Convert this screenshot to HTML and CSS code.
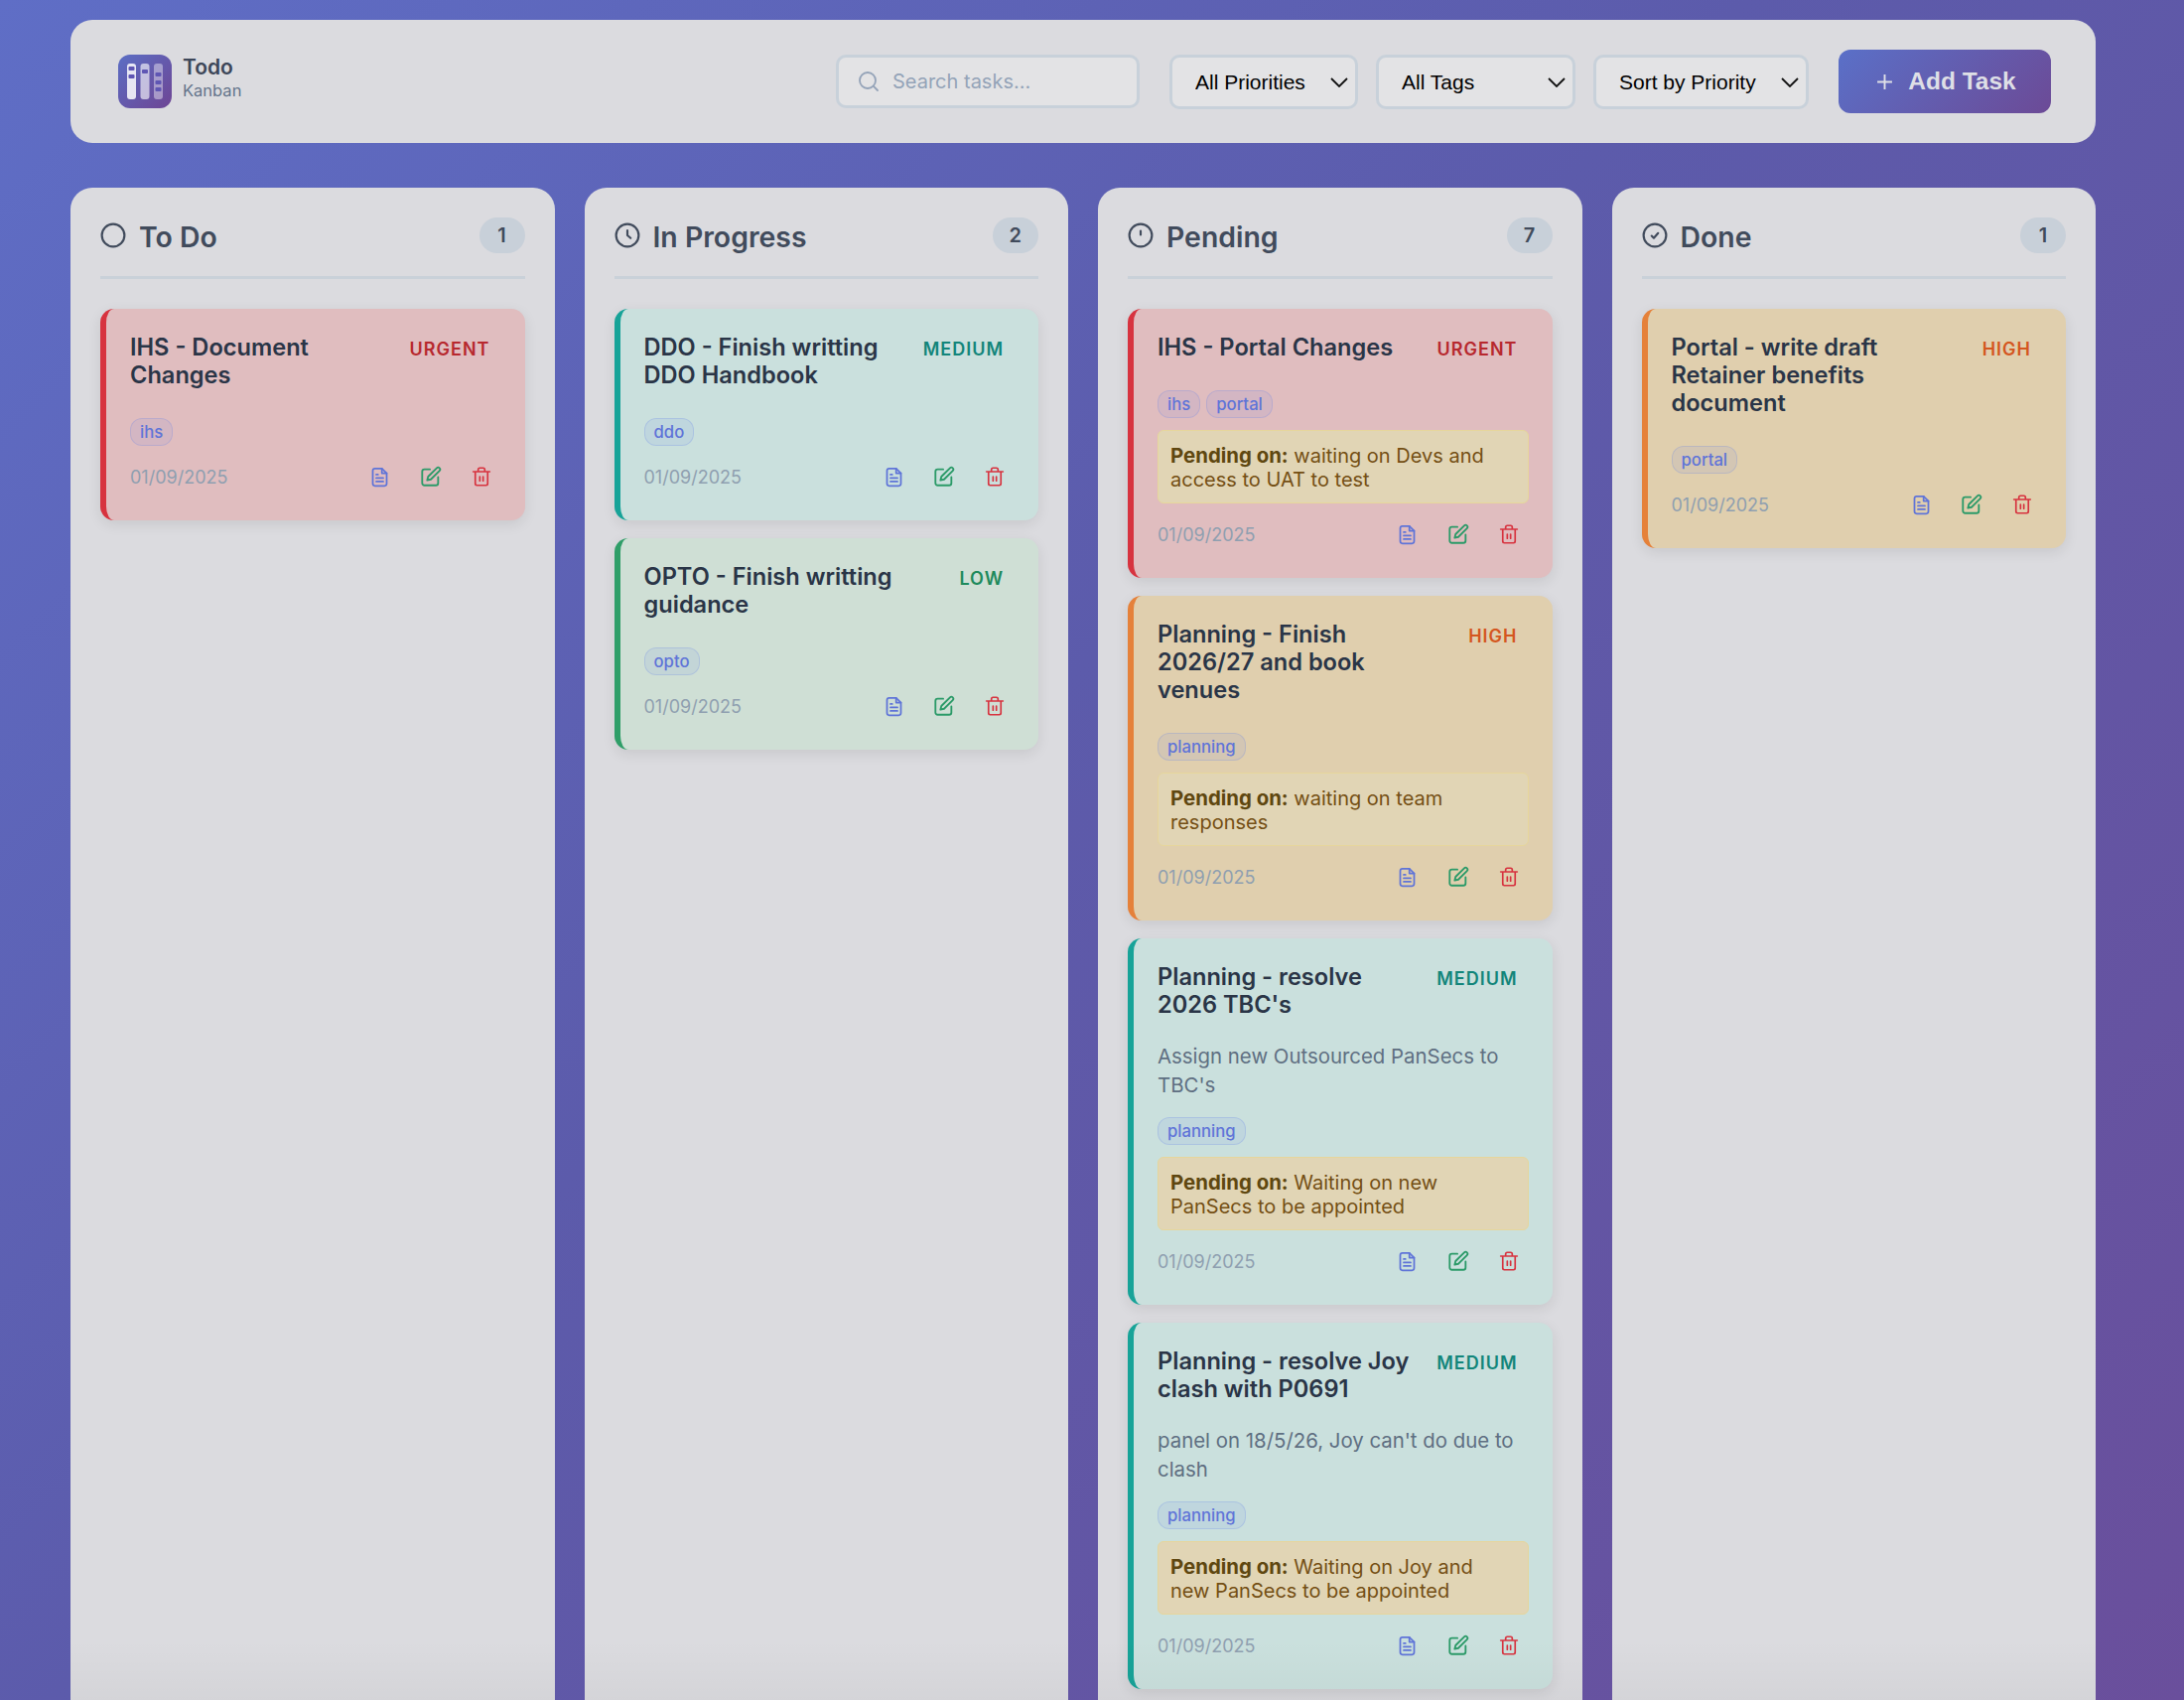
FILE: index.html
```html
<!DOCTYPE html>
<html lang="en">
<head>
  <meta charset="UTF-8" />
  <meta name="viewport" content="width=device-width, initial-scale=1.0"/>
  <title>Todo Kanban</title>
  <link rel="stylesheet" href="styles.css">
</head>
<body>
  <svg class="sprite" aria-hidden="true">
    <symbol id="i-doc" viewBox="0 0 20 24">
      <path d="M12.5 2H4.5A2.5 2.5 0 0 0 2 4.5v15A2.5 2.5 0 0 0 4.5 22h11a2.500 2.500 0 0 0 2.500-2.500V7.500z"/>
      <path d="M12.500 2v5.500H18M6 9h2M6 13h8M6 17h8"/>
    </symbol>
    <symbol id="i-edit" viewBox="0 0 24 24">
      <path d="M11 4H5a2.500 2.500 0 0 0-2.500 2.500V19A2.500 2.500 0 0 0 5 21.500h12.500A2.500 2.500 0 0 0 20 19v-6.500"/>
      <path d="M18.500 2.500a2.100 2.100 0 0 1 3 3L12 15l-4 1 1-4z"/>
    </symbol>
    <symbol id="i-trash" viewBox="0 0 22 24">
      <path d="M1 6h20M3.500 6v14.500A2 2 0 0 0 5.500 22.500h11a2 2 0 0 0 2-2V6M7 6V3.500a2 2 0 0 1 2-2h4a2 2 0 0 1 2 2V6M9 12v5M13 12v5"/>
    </symbol>
    <symbol id="i-chevron" viewBox="0 0 18 10">
      <path d="M1 1l8 8 8-8"/>
    </symbol>
  </svg>

  <header class="topbar">
    <div class="brand">
      <svg class="brand-logo" viewBox="0 0 54 54">
        <defs>
          <linearGradient id="logoGrad" x1="0" y1="0" x2="1" y2="1">
            <stop offset="0" stop-color="#5b6ec4"/>
            <stop offset="1" stop-color="#6e4594"/>
          </linearGradient>
        </defs>
        <rect width="54" height="54" rx="12" fill="url(#logoGrad)"/>
        <rect x="9" y="9" width="9" height="36" rx="3" fill="#fff" fill-opacity=".85"/>
        <rect x="22.500" y="9" width="9" height="36" rx="3" fill="#fff" fill-opacity=".62"/>
        <rect x="36" y="9" width="9" height="36" rx="3" fill="#fff" fill-opacity=".42"/>
        <g fill="#5f56b4">
          <rect x="10.500" y="12" width="6" height="4" rx="1"/>
          <rect x="10.500" y="20" width="6" height="4" rx="1"/>
          <rect x="24" y="15" width="6" height="4" rx="1"/>
          <rect x="37.500" y="18" width="6" height="4" rx="1"/>
          <rect x="37.500" y="26" width="6" height="4" rx="1"/>
          <rect x="37.500" y="33" width="6" height="4" rx="1"/>
        </g>
      </svg>
      <div class="brand-text">
        <div class="brand-name">Todo</div>
        <div class="brand-sub">Kanban</div>
      </div>
    </div>

    <div class="controls">
      <label class="search">
        <svg viewBox="0 0 24 24"><circle cx="11" cy="11" r="8"/><path d="M21 21l-4.300-4.300"/></svg>
        <input type="text" placeholder="Search tasks..." />
      </label>
      <div class="filters">
        <div class="select-wrap w-priority">
          <select><option>All Priorities</option></select>
          <svg><use href="#i-chevron"/></svg>
        </div>
        <div class="select-wrap w-tags">
          <select><option>All Tags</option></select>
          <svg><use href="#i-chevron"/></svg>
        </div>
        <div class="select-wrap w-sort">
          <select><option>Sort by Priority</option></select>
          <svg><use href="#i-chevron"/></svg>
        </div>
      </div>
      <button class="add-btn">
        <svg viewBox="0 0 16 16"><path d="M8 1v14M1 8h14"/></svg>
        Add Task
      </button>
    </div>
  </header>

  <main class="board">
    <!-- To Do -->
    <section class="column">
      <div class="column-head">
        <h2><svg viewBox="0 0 24 24"><circle cx="12" cy="12" r="10.500"/></svg>To Do</h2>
        <span class="count">1</span>
      </div>
      <article class="task urgent">
        <div class="task-head">
          <h3>IHS - Document Changes</h3>
          <span class="priority">URGENT</span>
        </div>
        <div class="tags"><span class="tag">ihs</span></div>
        <div class="task-foot">
          <span class="date">01/09/2025</span>
          <div class="actions">
            <button class="act doc"><svg><use href="#i-doc"/></svg></button>
            <button class="act edit"><svg><use href="#i-edit"/></svg></button>
            <button class="act del"><svg><use href="#i-trash"/></svg></button>
          </div>
        </div>
      </article>
    </section>

    <!-- In Progress -->
    <section class="column">
      <div class="column-head">
        <h2><svg viewBox="0 0 24 24"><circle cx="12" cy="12" r="10.500"/><path d="M12 7.500V12l3 2.500"/></svg>In Progress</h2>
        <span class="count">2</span>
      </div>
      <article class="task medium">
        <div class="task-head">
          <h3>DDO - Finish writting DDO Handbook</h3>
          <span class="priority">MEDIUM</span>
        </div>
        <div class="tags"><span class="tag">ddo</span></div>
        <div class="task-foot">
          <span class="date">01/09/2025</span>
          <div class="actions">
            <button class="act doc"><svg><use href="#i-doc"/></svg></button>
            <button class="act edit"><svg><use href="#i-edit"/></svg></button>
            <button class="act del"><svg><use href="#i-trash"/></svg></button>
          </div>
        </div>
      </article>
      <article class="task low">
        <div class="task-head">
          <h3>OPTO - Finish writting guidance</h3>
          <span class="priority">LOW</span>
        </div>
        <div class="tags"><span class="tag">opto</span></div>
        <div class="task-foot">
          <span class="date">01/09/2025</span>
          <div class="actions">
            <button class="act doc"><svg><use href="#i-doc"/></svg></button>
            <button class="act edit"><svg><use href="#i-edit"/></svg></button>
            <button class="act del"><svg><use href="#i-trash"/></svg></button>
          </div>
        </div>
      </article>
    </section>

    <!-- Pending -->
    <section class="column">
      <div class="column-head">
        <h2><svg viewBox="0 0 24 24"><circle cx="12" cy="12" r="10.500"/><path d="M12 8v3.500"/></svg>Pending</h2>
        <span class="count">7</span>
      </div>
      <article class="task urgent">
        <div class="task-head">
          <h3>IHS - Portal Changes</h3>
          <span class="priority">URGENT</span>
        </div>
        <div class="tags"><span class="tag">ihs</span><span class="tag">portal</span></div>
        <div class="pending-note"><strong>Pending on:</strong> waiting on Devs and access to UAT to test</div>
        <div class="task-foot">
          <span class="date">01/09/2025</span>
          <div class="actions">
            <button class="act doc"><svg><use href="#i-doc"/></svg></button>
            <button class="act edit"><svg><use href="#i-edit"/></svg></button>
            <button class="act del"><svg><use href="#i-trash"/></svg></button>
          </div>
        </div>
      </article>
      <article class="task high">
        <div class="task-head">
          <h3>Planning - Finish 2026/27 and book venues</h3>
          <span class="priority">HIGH</span>
        </div>
        <div class="tags"><span class="tag">planning</span></div>
        <div class="pending-note"><strong>Pending on:</strong> waiting on team responses</div>
        <div class="task-foot">
          <span class="date">01/09/2025</span>
          <div class="actions">
            <button class="act doc"><svg><use href="#i-doc"/></svg></button>
            <button class="act edit"><svg><use href="#i-edit"/></svg></button>
            <button class="act del"><svg><use href="#i-trash"/></svg></button>
          </div>
        </div>
      </article>
      <article class="task medium">
        <div class="task-head">
          <h3>Planning - resolve 2026 TBC's</h3>
          <span class="priority">MEDIUM</span>
        </div>
        <p class="desc">Assign new Outsourced PanSecs to TBC's</p>
        <div class="tags"><span class="tag">planning</span></div>
        <div class="pending-note"><strong>Pending on:</strong> Waiting on new PanSecs to be appointed</div>
        <div class="task-foot">
          <span class="date">01/09/2025</span>
          <div class="actions">
            <button class="act doc"><svg><use href="#i-doc"/></svg></button>
            <button class="act edit"><svg><use href="#i-edit"/></svg></button>
            <button class="act del"><svg><use href="#i-trash"/></svg></button>
          </div>
        </div>
      </article>
      <article class="task medium">
        <div class="task-head">
          <h3>Planning - resolve Joy clash with P0691</h3>
          <span class="priority">MEDIUM</span>
        </div>
        <p class="desc">panel on 18/5/26, Joy can't do due to clash</p>
        <div class="tags"><span class="tag">planning</span></div>
        <div class="pending-note"><strong>Pending on:</strong> Waiting on Joy and new PanSecs to be appointed</div>
        <div class="task-foot">
          <span class="date">01/09/2025</span>
          <div class="actions">
            <button class="act doc"><svg><use href="#i-doc"/></svg></button>
            <button class="act edit"><svg><use href="#i-edit"/></svg></button>
            <button class="act del"><svg><use href="#i-trash"/></svg></button>
          </div>
        </div>
      </article>
    </section>

    <!-- Done -->
    <section class="column">
      <div class="column-head">
        <h2><svg viewBox="0 0 24 24"><circle cx="12" cy="12" r="10.500"/><path d="M9 12.500l2 2 4-4.500"/></svg>Done</h2>
        <span class="count">1</span>
      </div>
      <article class="task high">
        <div class="task-head">
          <h3>Portal - write draft Retainer benefits document</h3>
          <span class="priority">HIGH</span>
        </div>
        <div class="tags"><span class="tag">portal</span></div>
        <div class="task-foot">
          <span class="date">01/09/2025</span>
          <div class="actions">
            <button class="act doc"><svg><use href="#i-doc"/></svg></button>
            <button class="act edit"><svg><use href="#i-edit"/></svg></button>
            <button class="act del"><svg><use href="#i-trash"/></svg></button>
          </div>
        </div>
      </article>
    </section>
  </main>
</body>
</html>
```

FILE: styles.css
```css
* {
  box-sizing: border-box;
}

html,
body {
  height: 1712px;
  overflow: hidden;
}

body {
  margin: 0;
  padding: 20px 89px 0 71px;
  background: linear-gradient(135deg, #5f6ec6 0%, #5c5bab 45%, #6a4f9c 100%);
  font-family: Inter, sans-serif;
  color: #2d3748;
}

.sprite {
  display: none;
}

/* top bar */
.topbar {
  display: flex;
  align-items: center;
  justify-content: space-between;
  height: 124px;
  padding: 0 45px 0 48px;
  margin-bottom: 45px;
  background: #dbdbdf;
  border-radius: 22px;
}

.brand {
  display: flex;
  align-items: center;
  gap: 11px;
}

.brand-logo {
  display: block;
  width: 54px;
  height: 54px;
}

.brand-text {
  padding-bottom: 8px;
}

.brand-name {
  font-size: 21px;
  font-weight: 600;
  line-height: 26px;
  color: #3d4759;
}

.brand-sub {
  font-size: 16.500px;
  line-height: 20px;
  color: #64748b;
}

.controls {
  display: flex;
  align-items: center;
  gap: 30px;
}

.search {
  display: flex;
  align-items: center;
  gap: 12px;
  width: 306px;
  height: 54px;
  padding: 0 18px;
  background: #e3e3e5;
  border: 3px solid #c8d1da;
  border-radius: 10px;
}

.search svg {
  flex: none;
  width: 24px;
  height: 24px;
  fill: none;
  stroke: #94a3b8;
  stroke-width: 1.800;
  stroke-linecap: round;
}

.search input {
  width: 100%;
  min-width: 0;
  padding: 0;
  border: none;
  outline: none;
  background: none;
  font-family: Inter, sans-serif;
  font-size: 20px;
}

.search input::placeholder {
  color: #94a3b8;
  opacity: 1;
}

.filters {
  display: flex;
  gap: 18px;
}

.select-wrap {
  position: relative;
  height: 55px;
}

.select-wrap select {
  width: 100%;
  height: 100%;
  padding: 0 30px 0 23px;
  appearance: none;
  background: #e3e3e5;
  border: 3px solid #c8d1da;
  border-radius: 10px;
  font-family: "Liberation Sans", sans-serif;
  font-size: 21px;
  color: #000;
}

.select-wrap svg {
  position: absolute;
  top: 23px;
  right: 10px;
  width: 18px;
  height: 10px;
  fill: none;
  stroke: #111;
  stroke-width: 1.800;
  pointer-events: none;
}

.w-priority { width: 190px; }
.w-tags { width: 201px; }
.w-sort { width: 217px; }

.add-btn {
  display: flex;
  align-items: center;
  justify-content: center;
  gap: 15px;
  width: 214px;
  height: 64px;
  padding: 0 0 0 3px;
  border: none;
  border-radius: 12px;
  background: linear-gradient(135deg, #5a70c8 0%, #6c4a96 100%);
  font-family: "Liberation Sans", sans-serif;
  font-size: 24.500px;
  font-weight: 700;
  color: #dedfe6;
}

.add-btn svg {
  width: 17px;
  height: 17px;
  fill: none;
  stroke: #dedfe6;
  stroke-width: 1.800;
}

/* board */
.board {
  display: grid;
  grid-template-columns: repeat(4, 1fr);
  gap: 30px;
}

.column {
  position: relative;
  height: 1600px;
  padding: 30px;
  background: #dbdbdf;
  border-radius: 22px 22px 0 0;
}

.column::after {
  content: "";
  position: absolute;
  left: 0;
  right: 0;
  top: 1463px;
  height: 60px;
  background: linear-gradient(to bottom, rgba(0, 0, 0, 0), rgba(0, 0, 0, 0.03));
  pointer-events: none;
}

.column-head {
  display: flex;
  align-items: center;
  justify-content: space-between;
  height: 62px;
  padding-bottom: 23px;
  margin-bottom: 30px;
  border-bottom: 3px solid #c9d1d9;
}

.column-head h2 {
  display: flex;
  align-items: center;
  gap: 13px;
  margin: 0;
  padding-top: 2px;
  font-size: 28.400px;
  font-weight: 600;
  color: #414b5c;
}

.column-head h2 svg {
  width: 26px;
  height: 26px;
  margin-top: -2px;
  fill: none;
  stroke: #414b5c;
  stroke-width: 2;
  stroke-linecap: round;
  stroke-linejoin: round;
}

.count {
  min-width: 46px;
  height: 36px;
  padding: 0 17px;
  line-height: 36px;
  text-align: center;
  background: #c8d0d9;
  border-radius: 18px;
  font-size: 20px;
  font-weight: 600;
  color: #414b5c;
}

/* task cards */
.task {
  padding: 25px 24px 26px;
  margin-bottom: 18px;
  border-left: 6px solid;
  border-radius: 14px;
  box-shadow: 0 4px 14px rgba(0, 0, 0, 0.09);
}

.task.urgent { background: #e0bdbf; border-color: #d7333f; }
.task.high { background: #e0cfae; border-color: #e5813a; }
.task.medium { background: #cae0dd; border-color: #17a398; }
.task.low { background: #cfdfd5; border-color: #2f9e68; }

.task-head {
  display: flex;
  align-items: flex-start;
  justify-content: space-between;
  gap: 12px;
}

.task-head h3 {
  margin: 0;
  font-size: 23.600px;
  font-weight: 600;
  line-height: 28px;
  color: #2a3547;
}

.priority {
  flex: none;
  padding: 3px 11px 0 12px;
  font-size: 18px;
  font-weight: 600;
  line-height: 25px;
  letter-spacing: 1px;
}

.urgent .priority { color: #b7282e; }
.high .priority { color: #d4561f; }
.medium .priority { color: #12857a; }
.low .priority { color: #1e8a5c; }

.desc {
  margin: 23px 0 0;
  font-size: 20.400px;
  line-height: 29px;
  color: #5f6f82;
}

.tags {
  display: flex;
  gap: 6px;
  margin-top: 18px;
}

.task-head + .tags {
  margin-top: 29px;
}

.tag {
  height: 28px;
  padding: 0 9px;
  line-height: 26px;
  background: rgba(102, 126, 234, 0.1);
  border: 1px solid rgba(102, 126, 234, 0.22);
  border-radius: 12px;
  font-size: 16.700px;
  font-weight: 500;
  color: #5f74d8;
}

.pending-note {
  margin-top: 12px;
  padding: 13px 12px 11px;
  background: #e1d5b5;
  border: 1px solid #e6d69c;
  border-radius: 6px;
  font-size: 20px;
  line-height: 24px;
  color: #744f14;
}

.pending-note strong {
  font-size: 20.400px;
  font-weight: 700;
  color: #5f4710;
}

.task-foot {
  display: flex;
  align-items: center;
  justify-content: space-between;
  height: 36px;
  margin-top: 13px;
}

.date {
  font-size: 18px;
  color: #8f9fb0;
}

.actions {
  display: flex;
  gap: 15px;
  margin-right: 2px;
}

.act {
  display: flex;
  align-items: center;
  justify-content: center;
  width: 36px;
  height: 36px;
  padding: 0;
  border: none;
  background: none;
}

.act svg {
  width: 22px;
  height: 22px;
  fill: none;
  stroke-width: 2;
  stroke-linecap: round;
  stroke-linejoin: round;
}

.act.doc svg { width: 21px; height: 21px; stroke: #5f74d8; }
.act.edit svg { stroke: #2b9a68; }
.act.del svg { width: 20px; height: 20px; stroke: #d7333f; }
```
